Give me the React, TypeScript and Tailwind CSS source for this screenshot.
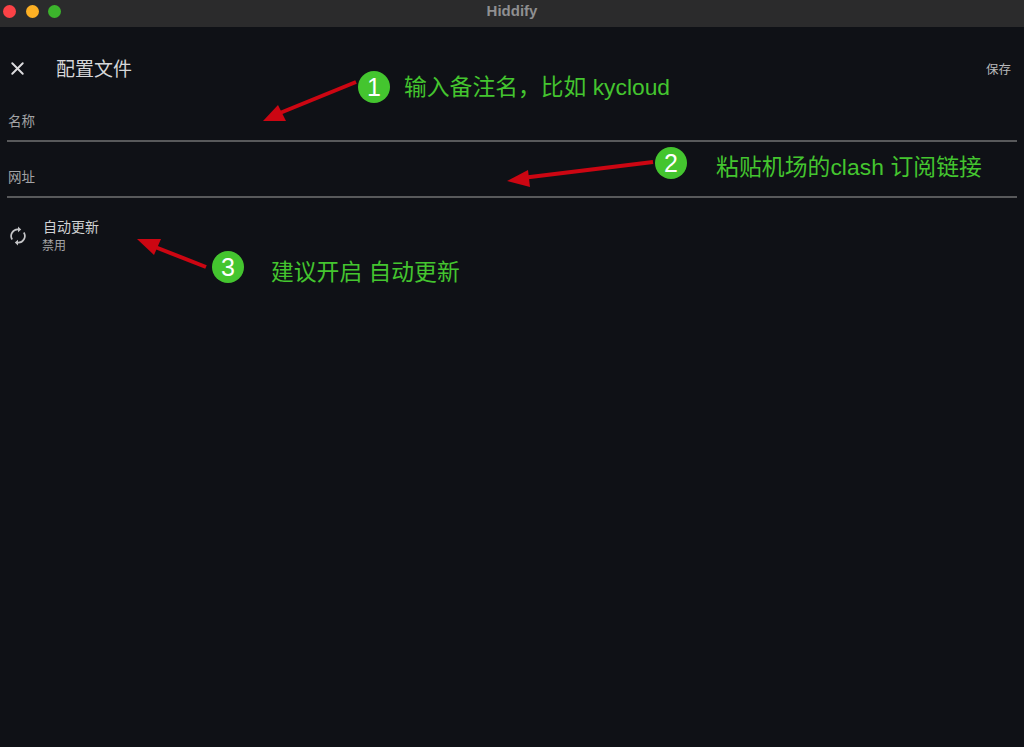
import { X } from "lucide-react";

const font = { fontFamily: '"Liberation Sans", "Noto Sans CJK SC", sans-serif' };

function Field({ label }: { label: string }) {
  return (
    <div className="mx-[7px] flex h-[56px] items-end border-b-2 border-[#58595b] pb-[8px] pl-px text-[13.5px] leading-[20px] text-[#a3a4a6]">
      {label}
    </div>
  );
}

function Step({ n, className }: { n: number; className: string }) {
  return (
    <div
      className={`absolute flex h-8 w-8 items-center justify-center rounded-full bg-[#44c52f] text-[25px] leading-none text-white ${className}`}
    >
      {n}
    </div>
  );
}

function Note({ text, className }: { text: string; className: string }) {
  return (
    <div className={`absolute whitespace-nowrap text-[22.8px] leading-[30px] text-[#44c52f] ${className}`}>
      {text}
    </div>
  );
}

function Arrows() {
  return (
    <svg className="absolute inset-0" width="1024" height="747" fill="#cc0612" stroke="none">
      <path d="M356 82 L275 115" stroke="#cc0612" strokeWidth="4" />
      <path d="M263 121 L278 105 L286 121 Z" />
      <path d="M653 162 L522 178" stroke="#cc0612" strokeWidth="4" />
      <path d="M507 181 L528 170 L530 187 Z" />
      <path d="M206 267 L150 245" stroke="#cc0612" strokeWidth="4" />
      <path d="M137 239 L161 239 L154 255 Z" />
    </svg>
  );
}

function SyncIcon() {
  return (
    <svg width="20" height="20" viewBox="0 0 20 20" fill="none" stroke="#c4c5c7" strokeWidth="1.7">
      <path d="M4.2 13.5 A6.6 6.6 0 0 1 10.5 3.4" />
      <path d="M15.8 6.5 A6.6 6.6 0 0 1 9.5 16.6" />
      <path d="M10 0.6 L13.2 3.4 L10 6.2 Z" fill="#c4c5c7" stroke="none" />
      <path d="M10 13.8 L6.8 16.6 L10 19.4 Z" fill="#c4c5c7" stroke="none" />
    </svg>
  );
}

export default function App() {
  return (
    <div className="relative h-[747px] w-[1024px] overflow-hidden bg-[#0f1116]" style={font}>
      <div className="relative flex h-[27px] items-start justify-center bg-[#2b2b2c]">
        <div className="absolute left-[3px] top-[5px] flex gap-[9.5px]">
          <span className="h-[13px] w-[13px] rounded-full bg-[#fb4246]" />
          <span className="h-[13px] w-[13px] rounded-full bg-[#fdb024]" />
          <span className="h-[13px] w-[13px] rounded-full bg-[#3cb42c]" />
        </div>
        <span className="text-[15px] font-bold leading-[22px] text-[#8f8f91]">Hiddify</span>
      </div>

      <div className="flex h-[59px] items-center justify-between pb-[2px] pl-[7px] pr-[13px] pt-[29px]">
        <div className="flex items-center">
          <X size={21} strokeWidth={2.2} className="mb-[4px] text-[#dcdcde]" />
          <span className="ml-[28px] text-[19px] leading-[24px] text-[#d6d7d9]">配置文件</span>
        </div>
        <span className="text-[12.5px] text-[#b8b9bb]">保存</span>
      </div>

      <Field label="名称" />
      <Field label="网址" />

      <div className="mt-[20px] flex items-center pl-[8px]">
        <SyncIcon />
        <div className="ml-[14px] flex flex-col">
          <span className="-mt-px mb-px ml-px text-[14px] leading-[20px] text-[#d0d1d3]">自动更新</span>
          <span className="text-[12px] leading-[16px] text-[#a3a4a6]">禁用</span>
        </div>
      </div>

      <Arrows />
      <Step n={1} className="left-[358px] top-[71px]" />
      <Step n={2} className="left-[655px] top-[147px]" />
      <Step n={3} className="left-[212px] top-[251px]" />
      <Note text="输入备注名，比如 kycloud" className="left-[404px] top-[72px]" />
      <Note text="粘贴机场的clash 订阅链接" className="left-[716px] top-[152px] tracking-[0.08px]" />
      <Note text="建议开启 自动更新" className="left-[271px] top-[257px]" />
    </div>
  );
}
